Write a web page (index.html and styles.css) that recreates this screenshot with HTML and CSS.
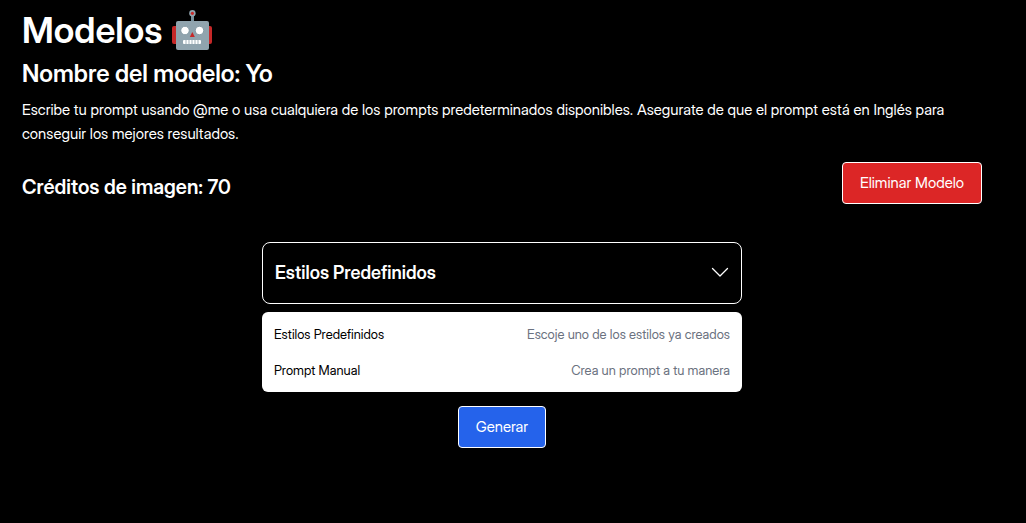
FILE: index.html
```html
<!DOCTYPE html>
<html lang="es">
<head>
<meta charset="utf-8">
<meta name="viewport" content="width=device-width, initial-scale=1">
<title>Modelos</title>
<link rel="stylesheet" href="styles.css">
</head>
<body>
<main class="page">
  <h1 class="title">Modelos <svg class="robot" viewBox="0 0 40 40" role="img" aria-label="Robot">
    <rect x="0" y="16" width="6" height="18" rx="2" fill="#c62828"/>
    <rect x="34" y="16" width="6" height="18" rx="2" fill="#c62828"/>
    <path fill="#78909c" d="M19 5h3v7h-3z"/>
    <rect x="4" y="11" width="33" height="29" rx="2" fill="#90a4ae"/>
    <circle cx="20.400" cy="3.300" r="3.200" fill="#90a4ae"/>
    <circle cx="20.400" cy="3.300" r="1.600" fill="#c62828"/>
    <g fill="#fff" stroke="#78909c" stroke-width=".8"><circle cx="13" cy="20.500" r="4.200"/><circle cx="27.500" cy="20.500" r="4.200"/></g>
    <path fill="#c62828" d="M20.300 22l2.500 5h-5z"/>
    <rect x="11" y="30" width="18" height="4" rx="1" fill="#fff"/>
    <path stroke="#78909c" stroke-width=".7" d="M14 30v4M17 30v4M20 30v4M23 30v4M26 30v4"/>
  </svg></h1>
  <h2 class="model-name">Nombre del modelo: Yo</h2>
  <p class="intro">Escribe tu prompt usando @me o usa cualquiera de los prompts predeterminados disponibles. Asegurate de que el prompt está en Inglés para conseguir los mejores resultados.</p>
  <div class="credits-row">
    <h3 class="credits">Créditos de imagen: 70</h3>
    <button class="button button-danger" type="button">Eliminar Modelo</button>
  </div>
  <form class="generator">
    <button class="picker" type="button" aria-expanded="true" aria-controls="styles-list">
      <span>Estilos Predefinidos</span>
      <svg class="chevron" viewBox="0 0 18 18" aria-hidden="true"><path fill="none" stroke="currentColor" stroke-width="1.300" stroke-linecap="round" stroke-linejoin="round" d="M1.500 4.500L9 12l7.500-7.500"/></svg>
    </button>
    <div class="options" id="styles-list">
      <button class="option" type="button"><span>Estilos Predefinidos</span><span class="option-hint">Escoje uno de los estilos ya creados</span></button>
      <button class="option" type="button"><span>Prompt Manual</span><span class="option-hint">Crea un prompt a tu manera</span></button>
    </div>
    <button class="button button-primary" type="button">Generar</button>
  </form>
</main>
</body>
</html>
```
FILE: styles.css
```css
* { box-sizing: border-box; }
body { margin: 0; background: #000; color: #fff; font: 15px/24px "Inter Display", Inter, sans-serif; }
h1, h2, h3, p { margin: 0; }
button { font: inherit; cursor: pointer; }
.page { padding: 10px 44px 24px 22px; }
.title { display: flex; align-items: center; gap: 10px; font-size: 36px; line-height: 40px; font-weight: 600; }
.robot { width: 40px; height: 40px; }
.model-name { margin-top: 8px; font-size: 24px; line-height: 32px; font-weight: 600; }
.intro { margin-top: 8px; }
.credits-row { display: flex; align-items: center; justify-content: space-between; margin-top: 16px; }
.credits { padding-top: 8px; font-size: 20px; line-height: 28px; font-weight: 600; }
.button { padding: 8px 17px; border: 1px solid #fff; border-radius: 4px; color: #fff; }
.button-danger { background: #dc2626; }
.button-primary { background: #2563eb; margin-top: 14px; }
.generator { display: flex; flex-direction: column; align-items: center; margin-top: 38px; }
.picker { display: flex; align-items: center; justify-content: space-between; width: 100%; max-width: 480px; padding: 16px 12px; border: 1px solid #fff; border-radius: 8px; background: #000; color: #fff; font-size: 18px; line-height: 28px; font-weight: 600; }
.chevron { width: 18px; height: 18px; }
.options { width: 100%; max-width: 480px; margin-top: 8px; padding: 4px 0; border-radius: 6px; background: #fff; }
.option { display: flex; justify-content: space-between; width: 100%; padding: 8px 12px; border: 0; background: none; color: #000; font-size: 13px; line-height: 20px; }
.option-hint { color: #6b7280; }
```
